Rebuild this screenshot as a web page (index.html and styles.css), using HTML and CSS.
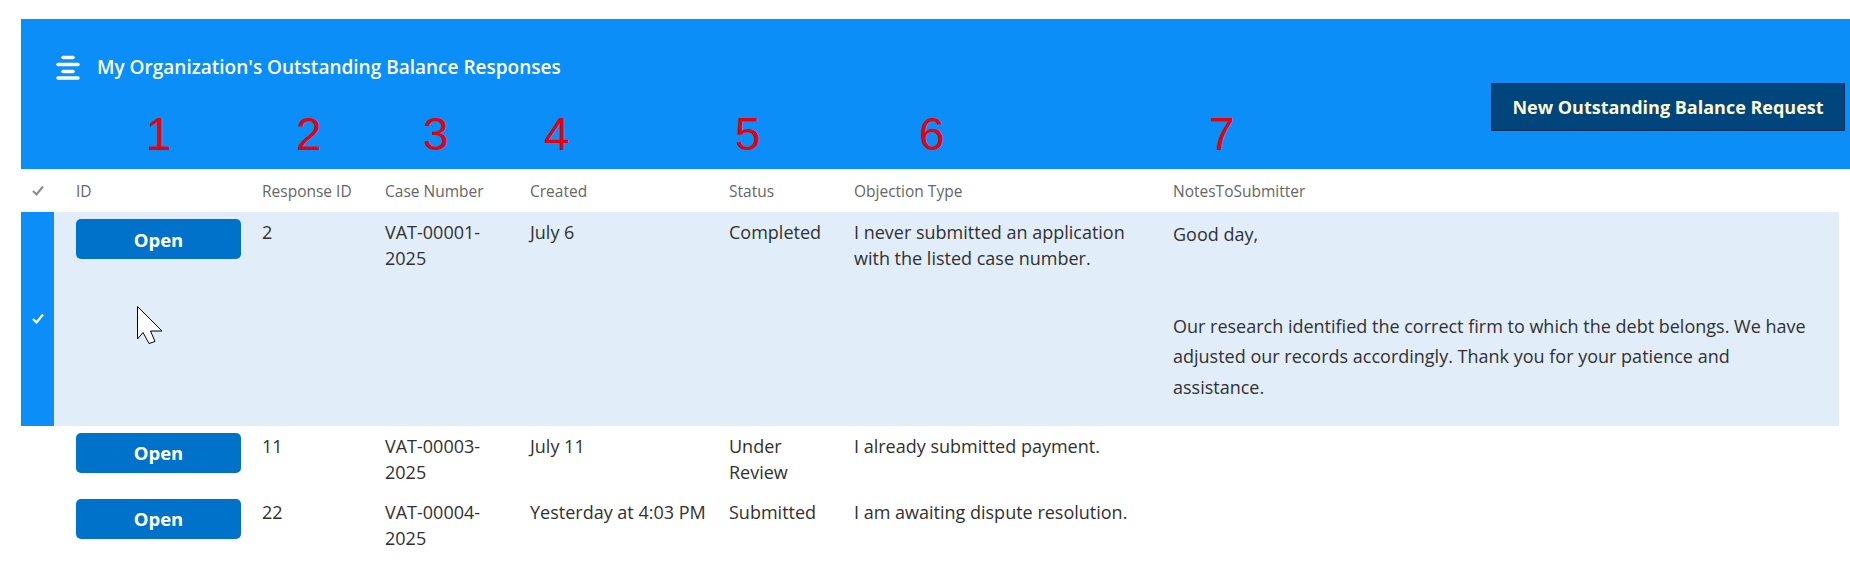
FILE: index.html
```html
<!DOCTYPE html>
<html lang="en">

<head>
    <meta charset="UTF-8">
    <meta name="viewport" content="width=device-width, initial-scale=1.0">
    <title>Outstanding Balance Responses</title>
    <link rel="stylesheet" href="styles.css">
</head>

<body>
    <div class="page">
        <header class="banner">
            <div class="banner-main">
                <div class="title-bar">
                    <svg class="title-icon" width="24" height="25" viewBox="0 0 24 25" fill="none" stroke="#fff" stroke-width="3.5" stroke-linecap="round">
                        <path d="M7 2.5h10" />
                        <path d="M2 9.5h20" />
                        <path d="M7 16.5h10" />
                        <path d="M2 23h20" />
                    </svg>
                    <h1>My Organization's Outstanding Balance Responses</h1>
                </div>
                <div class="marks cols">
                    <span></span>
                    <span class="mark m1">1</span>
                    <span class="mark m2">2</span>
                    <span class="mark m3">3</span>
                    <span class="mark m4">4</span>
                    <span class="mark m5">5</span>
                    <span class="mark m6">6</span>
                    <span class="mark m7">7</span>
                </div>
            </div>
            <button class="new-request">New Outstanding Balance Request</button>
        </header>

        <div class="grid">
            <div class="row head cols">
                <div class="check">
                    <svg width="12" height="11" viewBox="0 0 12 11" fill="none" stroke="#8a8a8a" stroke-width="2">
                        <path d="M1 6l3.5 3.5L11 1.5" />
                    </svg>
                </div>
                <div class="cell id">ID</div>
                <div class="cell">Response ID</div>
                <div class="cell">Case Number</div>
                <div class="cell">Created</div>
                <div class="cell">Status</div>
                <div class="cell">Objection Type</div>
                <div class="cell">NotesToSubmitter</div>
            </div>

            <div class="row item selected cols">
                <div class="check">
                    <svg width="12" height="11" viewBox="0 0 12 11" fill="none" stroke="#fff" stroke-width="2.2">
                        <path d="M1 6l3.5 3.5L11 1.5" />
                    </svg>
                </div>
                <div class="cell id"><button class="open">Open</button></div>
                <div class="cell">2</div>
                <div class="cell">VAT-00001-2025</div>
                <div class="cell">July 6</div>
                <div class="cell">Completed</div>
                <div class="cell">I never submitted an application with the listed case number.</div>
                <div class="cell notes">Good day,<br><br><br>Our research identified the correct firm to which the debt belongs. We have adjusted our records accordingly. Thank you for your patience and assistance.</div>
            </div>

            <div class="row item cols">
                <div class="check"></div>
                <div class="cell id"><button class="open">Open</button></div>
                <div class="cell">11</div>
                <div class="cell">VAT-00003-2025</div>
                <div class="cell">July 11</div>
                <div class="cell">Under Review</div>
                <div class="cell">I already submitted payment.</div>
                <div class="cell notes"></div>
            </div>

            <div class="row item cols">
                <div class="check"></div>
                <div class="cell id"><button class="open">Open</button></div>
                <div class="cell">22</div>
                <div class="cell">VAT-00004-2025</div>
                <div class="cell">Yesterday at 4:03 PM</div>
                <div class="cell">Submitted</div>
                <div class="cell">I am awaiting dispute resolution.</div>
                <div class="cell notes"></div>
            </div>
        </div>
    </div>

    <!-- mouse pointer resting over the selected row -->
    <svg class="pointer" width="27" height="40" viewBox="0 0 27 40">
        <path d="M0.5 0.5V33L6 26.5L12 37.5L18 35.5L13.5 25H25Z" fill="#fff" stroke="#000" stroke-width="1" stroke-linejoin="miter" />
    </svg>
</body>

</html>
```

FILE: styles.css
```css
body {
    margin: 0;
    background-color: #fff;
    font-family: "Open Sans", "Noto Sans", sans-serif;
    color: #323130;
}

.page {
    padding: 19px 0 0 21px;
}

.cols {
    display: grid;
    grid-template-columns: 33px 208px 123px 145px 199px 125px 319px 1fr;
}

/* blue banner */

.banner {
    background-color: #0b8ef8;
    display: flex;
    height: 150px;
    box-sizing: border-box;
}

.banner-main {
    flex: 1;
    padding-top: 35px;
}

.title-bar {
    display: flex;
    align-items: center;
    gap: 17px;
    padding-left: 35px;
    height: 26px;
}

.title-bar h1 {
    margin: 0;
    font-size: 19px;
    font-weight: 600;
    line-height: 26px;
    color: #fff;
}

.marks {
    margin-top: 31px;
    font-family: "Liberation Sans", Arial, sans-serif;
    font-size: 46px;
    line-height: 46px;
    color: #e8000b;
}

.mark.m1 { padding-left: 92px; }
.mark.m2 { padding-left: 34px; }
.mark.m3 { padding-left: 38px; }
.mark.m4 { padding-left: 14px; }
.mark.m5 { padding-left: 6px; }
.mark.m6 { padding-left: 65px; }
.mark.m7 { padding-left: 36px; }

.new-request {
    align-self: flex-start;
    margin: 64px 5px 0 0;
    width: 354px;
    height: 48px;
    background-color: #00457b;
    border: 1px solid #002b55;
    color: #fff8cf;
    font-family: inherit;
    font-size: 18px;
    font-weight: 700;
    cursor: pointer;
}

/* list */

.grid {
    margin-right: 11px;
}

.row.head {
    height: 43px;
    align-items: center;
    font-size: 15.5px;
    color: #666;
}

.row.head .check {
    display: flex;
    justify-content: center;
}

.cell {
    padding-right: 12px;
}

.cell.id {
    padding-left: 22px;
}

.row.item {
    font-size: 18px;
    line-height: 26px;
}

.row.item .cell {
    padding-top: 7px;
    padding-bottom: 7px;
}

.row.item.selected .cell {
    background-color: #e1eef9;
}

.row.item.selected .check {
    background-color: #0b8ef8;
    display: flex;
    align-items: center;
    justify-content: center;
}

.cell.notes {
    padding-right: 16px;
    line-height: 30.6px;
}

.row.selected .cell.notes {
    padding-bottom: 23px;
}

.open {
    display: block;
    width: 165px;
    height: 40px;
    border: none;
    border-radius: 5px;
    background-color: #0072c9;
    color: #fff;
    font-family: inherit;
    font-size: 18.5px;
    font-weight: 700;
    cursor: pointer;
}

.pointer {
    position: absolute;
    left: 137px;
    top: 306px;
}
```
